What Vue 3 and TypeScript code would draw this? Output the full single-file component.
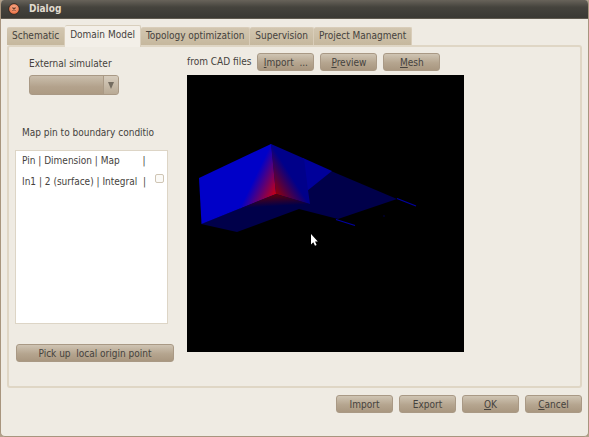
<script setup lang="ts">
import { ref } from 'vue'

const tabs: string[] = ['Schematic', 'Domain Model', 'Topology optimization', 'Supervision', 'Project Managment']
const active = ref<string>('Domain Model')
const simulator = ref<string>('')
const mapped = ref<boolean>(false)

const headingRow = 'Pin | Dimension | Map        |'
const pinRow = 'In1 | 2 (surface) | Integral  |'
const pickLabel = 'Pick up  local origin point'

interface Action {
  key: string
  rest: string
}
const cadActions: Action[] = [
  { key: 'I', rest: 'mport  ...' },
  { key: 'P', rest: 'review' },
  { key: 'M', rest: 'esh' },
]
const dialogActions: Action[] = [
  { key: '', rest: 'Import' },
  { key: '', rest: 'Export' },
  { key: 'O', rest: 'K' },
  { key: 'C', rest: 'ancel' },
]
</script>

<template>
  <div class="window">
    <header class="titlebar">
      <button class="close" type="button" aria-label="Close">
        <svg viewBox="0 0 12 12" width="12" height="12">
          <defs>
            <radialGradient id="closeFill" cx="50%" cy="40%" r="60%">
              <stop offset="0" stop-color="#f9b496" />
              <stop offset="1" stop-color="#e8683a" />
            </radialGradient>
          </defs>
          <circle cx="6" cy="6" r="5.4" fill="url(#closeFill)" stroke="#2c2a26" stroke-width="1" />
          <path d="M4.500 4.500 7.500 7.500M7.500 4.500 4.500 7.500" stroke="#6b3a26" stroke-width="1.2" />
        </svg>
      </button>
      <h1>Dialog</h1>
    </header>

    <main>
      <nav class="tabs" role="tablist">
        <button
          v-for="tab in tabs"
          :key="tab"
          type="button"
          role="tab"
          class="tab"
          :class="{ active: tab === active }"
          :aria-selected="tab === active"
          @click="active = tab"
        >{{ tab }}</button>
      </nav>

      <section class="pane">
        <div class="side">
          <label class="sim-label" for="simulator">External simulater</label>
          <div class="combo">
            <select id="simulator" v-model="simulator">
              <option value=""></option>
            </select>
            <span class="combo-arrow"><svg viewBox="0 0 6 7" width="6" height="7"><path d="M0 0H6L3 7Z" fill="#746c60" /></svg></span>
          </div>
          <p class="map-title">Map pin to boundary conditio</p>
          <div class="list">
            <div class="row">{{ headingRow }}</div>
            <label class="row">
              <span>{{ pinRow }}</span>
              <input v-model="mapped" type="checkbox" />
            </label>
          </div>
          <button class="btn pick" type="button">{{ pickLabel }}</button>
        </div>

        <div class="model">
          <div class="cad">
            <span>from CAD files</span>
            <button v-for="a in cadActions" :key="a.key" class="btn" type="button"><u>{{ a.key }}</u>{{ a.rest }}</button>
          </div>
          <svg class="view" viewBox="187 75 277 277">
            <defs>
              <linearGradient id="redLeft" gradientUnits="userSpaceOnUse" x1="252.3" y1="182.5" x2="276" y2="194">
                <stop offset="0" stop-color="#0000c8" />
                <stop offset="1" stop-color="#cc0010" />
              </linearGradient>
              <linearGradient id="redRight" gradientUnits="userSpaceOnUse" x1="295" y1="182" x2="276" y2="194">
                <stop offset="0" stop-color="#00008a" />
                <stop offset="1" stop-color="#920008" />
              </linearGradient>
              <linearGradient id="redUnder" gradientUnits="userSpaceOnUse" x1="276.7" y1="206" x2="276" y2="194">
                <stop offset="0" stop-color="#00004a" />
                <stop offset="1" stop-color="#600008" />
              </linearGradient>
            </defs>
            <rect x="187" y="75" width="277" height="277" fill="#000" />
            <path d="M331 171 397 199 338 219 299 209 307 190Z" fill="#00004a" />
            <path d="M201 224 276 194 310 204 299 209 237 232Z" fill="#00004a" />
            <path d="M303 158 332 171 307 191Z" fill="#00009a" />
            <path d="M271 144 304 158.500 308 190 310 204 276 194Z" fill="#00008a" />
            <path d="M199 178 271 144 276 194 201.500 224Z" fill="#0000c8" />
            <path d="M271 144 276 194 240 208.500Z" fill="url(#redLeft)" />
            <path d="M271 144 276 194 310 204Z" fill="url(#redRight)" />
            <path d="M240 208.500 276 194 310 204Z" fill="url(#redUnder)" />
            <path d="M397 198.500 416 206M336 219.500 355 225.500" stroke="#0000a0" stroke-width="1.3" />
            <circle cx="384" cy="216" r="0.7" fill="#000060" />
            <path d="M311 234V244.500L313.300 242.300 315 245.800 316.600 245 315 241.600H317.800Z" fill="#fff" />
          </svg>
        </div>
      </section>

      <footer>
        <button v-for="a in dialogActions" :key="a.rest" class="btn" type="button"><u>{{ a.key }}</u>{{ a.rest }}</button>
      </footer>
    </main>
  </div>
</template>

<style>
body {
  background: #b3a28b;
}
</style>

<style scoped>
.window {
  box-sizing: border-box;
  min-height: 100vh;
  display: flex;
  flex-direction: column;
  border: 1px solid #a8957e;
  border-top: 0;
  border-radius: 4px 4px 5px 5px;
  overflow: hidden;
  background: #efebe3;
  color: #45423d;
  font: 10px/16px "DejaVu Sans Condensed", "DejaVu Sans", sans-serif;
}
button,
select {
  font: inherit;
  color: inherit;
}
.titlebar {
  display: flex;
  align-items: center;
  gap: 9px;
  height: 19px;
  box-sizing: border-box;
  padding: 0 7px;
  background: linear-gradient(#68635a, #45433d 40%, #3a3934);
  border-bottom: 1px solid #5f5a50;
}
.close {
  width: 12px;
  height: 12px;
  padding: 0;
  border: 0;
  background: none;
}
.close svg {
  display: block;
}
h1 {
  margin: 0;
  color: #e0dbcf;
  font-size: 10px;
  font-weight: bold;
}
main {
  flex: 1;
  padding: 6px 6px 0;
}
.tabs {
  display: flex;
  align-items: flex-end;
  height: 20px;
}
.tab {
  height: 18px;
  padding: 0 5px 2px;
  border: 1px solid #d9cdb9;
  border-width: 1px 1px 0 0;
  border-radius: 2px 2px 0 0;
  background: linear-gradient(#d2c6b0, #c6b89e);
  line-height: 15px;
  white-space: nowrap;
}
.tab.active {
  position: relative;
  height: 22px;
  margin-bottom: -2px;
  border-color: #d9cfbd;
  background: #f3efe8;
  padding-bottom: 4px;
}
.pane {
  display: flex;
  gap: 13px;
  min-height: 343px;
  box-sizing: border-box;
  padding: 6px 6px 0;
  border: 2px solid #dfd6c5;
  border-radius: 3px;
}
.side {
  display: flex;
  flex-direction: column;
  width: 159px;
}
.sim-label {
  margin-left: 14px;
  margin-top: 3px;
}
.combo {
  position: relative;
  width: 90px;
  height: 20px;
  margin: 3px 0 0 14px;
}
.combo select {
  display: block;
  width: 100%;
  height: 100%;
  padding: 0 20px 0 6px;
  appearance: none;
  border: 1px solid #a99985;
  border-radius: 3px;
  background: linear-gradient(#cabeac, #b3a28c 60%, #ad9b84);
}
.combo-arrow {
  position: absolute;
  inset: 1px 1px 1px auto;
  width: 14px;
  display: flex;
  align-items: center;
  justify-content: center;
  border-left: 1px solid #a99985;
  border-radius: 0 2px 2px 0;
  background: linear-gradient(#d6ccbd, #b9aa95);
  pointer-events: none;
}
.map-title {
  margin: 30px 0 9px 7px;
  white-space: nowrap;
}
.list {
  box-sizing: border-box;
  width: 153px;
  height: 174px;
  padding: 2px 3px 0 6px;
  border: 1px solid #ddd5c6;
  background: #fff;
}
.row {
  display: flex;
  justify-content: space-between;
  height: 21px;
  white-space: pre;
}
.row input {
  appearance: none;
  box-sizing: border-box;
  width: 9px;
  height: 9px;
  margin: 0;
  border: 1px solid #cfc5b4;
  border-radius: 2px;
  background: #fbfaf7;
}
.row input:checked {
  background: #8c7b66;
}
.btn {
  box-sizing: border-box;
  width: 57px;
  height: 18px;
  padding: 0;
  border: 1px solid #a99985;
  border-radius: 3px;
  background: linear-gradient(#cfc4b3, #b5a58f 55%, #a99780);
  line-height: 15px;
  white-space: pre;
  text-align: center;
}
.btn.pick {
  align-self: flex-end;
  width: 158px;
  margin-top: 20px;
}
.model {
  flex: 1;
}
.cad {
  display: flex;
  align-items: center;
  gap: 6px;
  height: 18px;
}
.cad span {
  white-space: nowrap;
}
.view {
  display: block;
  width: 277px;
  height: 277px;
  margin-top: 4px;
}
footer {
  display: flex;
  justify-content: flex-end;
  gap: 6px;
  padding-top: 7px;
}
</style>
